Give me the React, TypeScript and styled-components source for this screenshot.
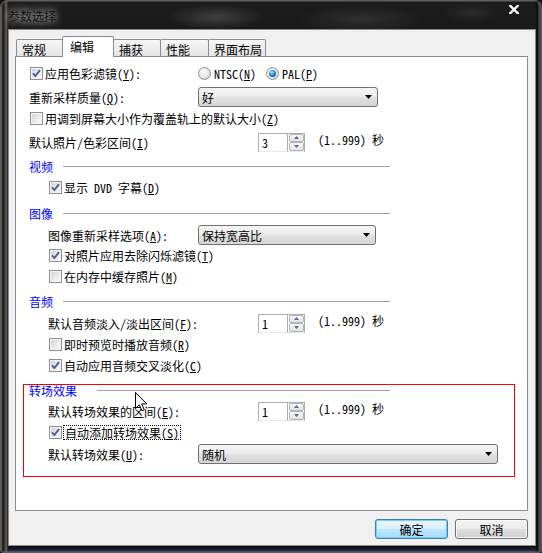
import React from "react";
import styled, { createGlobalStyle } from "styled-components";

const FONT = `"Noto Sans Mono CJK SC", "Noto Sans CJK SC", "DejaVu Sans", sans-serif`;

const GlobalStyle = createGlobalStyle`
  html, body { margin: 0; padding: 0; background: #111; }
  body { font-family: ${FONT}; font-size: 12px; color: #000; }
  * { box-sizing: border-box; }
`;

const Window = styled.div`
  position: relative;
  width: 542px;
  height: 553px;
  border: 1px solid #5e5e5e;
  border-radius: 7px 7px 3px 3px;
  padding: 0 5px 6px 7px;
  display: flex;
  flex-direction: column;
  overflow: hidden;
  background-color: #141414;
  background-image:
    radial-gradient(ellipse 70px 18px at 215px 16px, rgba(150, 150, 150, 0.3), transparent 70%),
    radial-gradient(ellipse 90px 20px at 360px 18px, rgba(120, 120, 120, 0.22), transparent 70%),
    radial-gradient(ellipse 40px 14px at 470px 12px, rgba(110, 110, 110, 0.2), transparent 70%),
    linear-gradient(90deg, #3a3632 0px, #1c1c1c 3px, #6a625c 5px, #222 7px, transparent 8px),
    linear-gradient(270deg, #101010 0px, #5a5a5a 2px, #0c0c0c 3px, transparent 6px),
    linear-gradient(0deg, #26355a 0px, #0d0d0d 5px, transparent 7px),
    linear-gradient(180deg, #1c1c1c 0%, #0e0e0e 30%, #161616 100%);
  box-shadow: inset 0 0 0 1px rgba(255, 255, 255, 0.16);
`;

const TitleBar = styled.div`
  height: 28px;
  flex-shrink: 0;
  display: flex;
  align-items: center;
`;

const Title = styled.span`
  margin-top: 1px;
  color: #111;
  line-height: 13px;
  text-shadow: 0 0 6px rgba(255, 255, 255, 0.75), 0 0 12px rgba(255, 255, 255, 0.5);
`;

const CloseGlyph = styled.svg`
  margin-left: auto;
  margin-right: 17px;
  align-self: flex-start;
  margin-top: 4px;
`;

const Client = styled.div`
  width: 528px;
  height: 517px;
  border: 1px solid #8a8a8a;
  background: #f0f0f0;
  padding: 6px 0 0 6px;
  display: flex;
  flex-direction: column;
`;

const TabRow = styled.div`
  display: flex;
  align-items: flex-end;
  height: 20px;
  padding-left: 1px;
`;

const Tab = styled.div<{ $w: number; $active?: boolean }>`
  width: ${(p) => p.$w}px;
  height: ${(p) => (p.$active ? 21 : 17)}px;
  margin-right: -1px;
  margin-bottom: ${(p) => (p.$active ? -1 : 0)}px;
  border: 1px solid #898c95;
  border-bottom: none;
  border-radius: 2px 2px 0 0;
  background: ${(p) => (p.$active ? "#ffffff" : "linear-gradient(#f6f6f6, #e4e4e4)")};
  position: relative;
  z-index: ${(p) => (p.$active ? 2 : 1)};
  display: flex;
  align-items: center;
  padding: ${(p) => (p.$active ? "0 0 2px 7px" : "2px 0 0 5px")};
  line-height: 13px;
  white-space: nowrap;
`;

const Panel = styled.div`
  width: 513px;
  height: 455px;
  border: 1px solid #898c95;
  background: #ffffff;
  padding-left: 13px;
  display: flex;
  flex-direction: column;
`;

const Row = styled.div<{ $mt?: number; $indent?: number; $h?: number }>`
  display: flex;
  align-items: center;
  height: ${(p) => p.$h ?? 20}px;
  margin-top: ${(p) => p.$mt ?? 0}px;
  padding-left: ${(p) => p.$indent ?? 0}px;
  white-space: nowrap;
`;

const Lead = styled.div<{ $w: number }>`
  display: flex;
  align-items: center;
  width: ${(p) => p.$w}px;
  flex-shrink: 0;
`;

const Text = styled.span`
  line-height: 13px;
`;

const Key = styled.span`
  text-decoration: underline;
`;

const FocusText = styled.span`
  line-height: 13px;
  margin-left: -1px;
  padding: 0 1px;
  border: 1px dotted #000;
`;

const Header = styled.div<{ $mt?: number; $h?: number }>`
  display: flex;
  align-items: center;
  width: 361px;
  height: ${(p) => p.$h ?? 20}px;
  margin-top: ${(p) => p.$mt ?? 0}px;
`;

const HeaderLabel = styled.span<{ $w: number }>`
  width: ${(p) => p.$w}px;
  flex-shrink: 0;
  color: #0000ff;
  line-height: 13px;
`;

const HeaderRule = styled.div`
  flex: 1;
  height: 1px;
  background: #a0a0a0;
`;

const Highlight = styled.div`
  margin: 9px 0 0 -6px;
  width: 492px;
  border: 1px solid #ff0000;
  padding: 0 0 12px 5px;
  display: flex;
  flex-direction: column;
`;

const CheckBox = styled.span`
  display: inline-flex;
  align-items: center;
  justify-content: center;
  width: 13px;
  height: 13px;
  flex-shrink: 0;
  margin-right: 2px;
  border: 1px solid #8f8f8f;
  background: linear-gradient(135deg, #cbd0d6 0%, #e9ebee 55%, #fbfbfb 100%);
  box-shadow: inset 0 0 0 1px #f4f4f4;
`;

const RadioItem = styled.span`
  display: inline-flex;
  align-items: center;
  margin-right: 10px;
`;

const RadioDot = styled.span<{ $on?: boolean }>`
  display: inline-flex;
  align-items: center;
  justify-content: center;
  width: 13px;
  height: 13px;
  flex-shrink: 0;
  margin-right: 3px;
  border-radius: 50%;
  border: 1px solid #8e8e8e;
  background: radial-gradient(circle at 40% 35%, #ffffff 0%, #ececec 45%, #cacaca 100%);
  &::after {
    content: "";
    display: ${(p) => (p.$on ? "block" : "none")};
    width: 7px;
    height: 7px;
    border-radius: 50%;
    background: radial-gradient(circle at 40% 35%, #d2f0ff 0%, #3c9de6 35%, #105aa8 75%, #0a3f7c 100%);
  }
`;

const Select = styled.div<{ $w: number }>`
  width: ${(p) => p.$w}px;
  height: 20px;
  border: 1px solid #707070;
  border-radius: 3px;
  background: linear-gradient(#f4f4f4 0%, #ececec 45%, #e0e0e0 55%, #d6d6d6 100%);
  display: flex;
  align-items: center;
  justify-content: space-between;
  padding: 0 5px 0 3px;
  line-height: 13px;
`;

const Spin = styled.div`
  display: flex;
  height: 19px;
`;

const SpinField = styled.div`
  width: 29px;
  height: 19px;
  border: 1px solid #abadb3;
  border-right: none;
  border-bottom-color: #e3e9ef;
  background: #ffffff;
  padding-left: 3px;
  display: flex;
  align-items: center;
  line-height: 13px;
`;

const SpinButtons = styled.div`
  width: 18px;
  height: 19px;
  border: 1px solid #abadb3;
  border-bottom-color: #e3e9ef;
  background: #ffffff;
  display: flex;
  flex-direction: column;
  padding: 0 0 0 1px;
`;

const SpinBtn = styled.div`
  flex: 1;
  border: 1px solid #b4b4b4;
  border-radius: 2px;
  background: linear-gradient(#f7f7f7, #e3e3e3);
  display: flex;
  align-items: center;
  justify-content: center;
`;

const Suffix = styled.span`
  margin-left: 13px;
  line-height: 13px;
`;

const ButtonRow = styled.div`
  display: flex;
  justify-content: flex-end;
  gap: 7px;
  margin-top: 8px;
  padding-right: 7px;
`;

const Button = styled.button<{ $primary?: boolean }>`
  width: 73px;
  height: 20px;
  padding: 0;
  border-radius: 3px;
  font-family: ${FONT};
  font-size: 12px;
  line-height: 13px;
  color: #000;
  border: 1px solid ${(p) => (p.$primary ? "#3c7fb1" : "#707070")};
  background: ${(p) =>
    p.$primary
      ? "linear-gradient(#eaf6fd 0%, #d9f0fc 49%, #bee6fd 51%, #a7d9f5 100%)"
      : "linear-gradient(#f2f2f2 0%, #ebebeb 49%, #dddddd 51%, #cfcfcf 100%)"};
  box-shadow: inset 0 0 0 1px ${(p) => (p.$primary ? "#6fd0ff" : "#fcfcfc")};
`;

const Cursor = styled.svg`
  position: absolute;
  left: 134px;
  top: 391px;
  z-index: 5;
`;

function Check({ checked }: { checked?: boolean }) {
  return (
    <CheckBox>
      {checked && (
        <svg width="9" height="9" viewBox="0 0 9 9">
          <path d="M1 4.3 L3.4 7 L8 1.2" fill="none" stroke="#4a5f97" strokeWidth="1.9" />
        </svg>
      )}
    </CheckBox>
  );
}

function Dropdown({ w, value }: { w: number; value: string }) {
  return (
    <Select $w={w}>
      <Text>{value}</Text>
      <svg width="7" height="4" viewBox="0 0 7 4">
        <path d="M0 0 H7 L3.5 4 Z" fill="#000" />
      </svg>
    </Select>
  );
}

function Spinner({ value }: { value: string }) {
  return (
    <Spin>
      <SpinField>
        <Text>{value}</Text>
      </SpinField>
      <SpinButtons>
        <SpinBtn>
          <svg width="5" height="3" viewBox="0 0 5 3">
            <path d="M0 3 H5 L2.5 0 Z" fill="#4f6c9e" />
          </svg>
        </SpinBtn>
        <SpinBtn>
          <svg width="5" height="3" viewBox="0 0 5 3">
            <path d="M0 0 H5 L2.5 3 Z" fill="#4f6c9e" />
          </svg>
        </SpinBtn>
      </SpinButtons>
      <Suffix>(1..999) 秒</Suffix>
    </Spin>
  );
}

const tabs = [
  { label: "常规", w: 47 },
  { label: "编辑", w: 52, active: true },
  { label: "捕获", w: 48 },
  { label: "性能", w: 49 },
  { label: "界面布局", w: 58 },
];

export default function App() {
  return (
    <>
      <GlobalStyle />
      <Window>
        <TitleBar>
          <Title>参数选择</Title>
          <CloseGlyph width="10" height="9" viewBox="0 0 10 9">
            <path d="M1 0.5 L9 8.5 M9 0.5 L1 8.5" stroke="#ffffff" strokeWidth="2.3" strokeLinecap="square" />
          </CloseGlyph>
        </TitleBar>
        <Client>
          <TabRow>
            {tabs.map((t) => (
              <Tab key={t.label} $w={t.w} $active={t.active}>
                {t.label}
              </Tab>
            ))}
          </TabRow>
          <Panel>
            <Row $mt={6} $indent={1}>
              <Lead $w={168}>
                <Check checked />
                <Text>
                  应用色彩滤镜(<Key>Y</Key>):
                </Text>
              </Lead>
              <RadioItem>
                <RadioDot />
                <Text>
                  NTSC(<Key>N</Key>)
                </Text>
              </RadioItem>
              <RadioItem>
                <RadioDot $on />
                <Text>
                  PAL(<Key>P</Key>)
                </Text>
              </RadioItem>
            </Row>
            <Row $mt={4}>
              <Lead $w={169}>
                <Text>
                  重新采样质量(<Key>Q</Key>):
                </Text>
              </Lead>
              <Dropdown w={180} value="好" />
            </Row>
            <Row $mt={1} $indent={1}>
              <Check />
              <Text>
                用调到屏幕大小作为覆盖轨上的默认大小(<Key>Z</Key>)
              </Text>
            </Row>
            <Row $mt={4}>
              <Lead $w={229}>
                <Text>
                  默认照片/色彩区间(<Key>I</Key>)
                </Text>
              </Lead>
              <Spinner value="3" />
            </Row>

            <Header $mt={4}>
              <HeaderLabel $w={34}>视频</HeaderLabel>
              <HeaderRule />
            </Header>
            <Row $mt={1} $indent={20}>
              <Check checked />
              <Text>
                显示 DVD 字幕(<Key>D</Key>)
              </Text>
            </Row>

            <Header $mt={6}>
              <HeaderLabel $w={34}>图像</HeaderLabel>
              <HeaderRule />
            </Header>
            <Row $mt={2} $indent={19}>
              <Lead $w={150}>
                <Text>
                  图像重新采样选项(<Key>A</Key>):
                </Text>
              </Lead>
              <Dropdown w={178} value="保持宽高比" />
            </Row>
            <Row $indent={20}>
              <Check checked />
              <Text>
                对照片应用去除闪烁滤镜(<Key>T</Key>)
              </Text>
            </Row>
            <Row $mt={1} $indent={20}>
              <Check />
              <Text>
                在内存中缓存照片(<Key>M</Key>)
              </Text>
            </Row>

            <Header $mt={5}>
              <HeaderLabel $w={34}>音频</HeaderLabel>
              <HeaderRule />
            </Header>
            <Row $mt={2} $indent={19}>
              <Lead $w={210}>
                <Text>
                  默认音频淡入/淡出区间(<Key>F</Key>):
                </Text>
              </Lead>
              <Spinner value="1" />
            </Row>
            <Row $mt={1} $indent={20}>
              <Check />
              <Text>
                即时预览时播放音频(<Key>R</Key>)
              </Text>
            </Row>
            <Row $mt={1} $indent={20}>
              <Check checked />
              <Text>
                自动应用音频交叉淡化(<Key>C</Key>)
              </Text>
            </Row>

            <Highlight>
              <Header $h={11}>
                <HeaderLabel $w={68}>转场效果</HeaderLabel>
                <HeaderRule />
              </Header>
              <Row $mt={5} $indent={19}>
                <Lead $w={210}>
                  <Text>
                    默认转场效果的区间(<Key>E</Key>):
                  </Text>
                </Lead>
                <Spinner value="1" />
              </Row>
              <Row $mt={1} $indent={20}>
                <Check checked />
                <FocusText>
                  自动添加转场效果(<Key>S</Key>)
                </FocusText>
              </Row>
              <Row $mt={2} $indent={19}>
                <Lead $w={150}>
                  <Text>
                    默认转场效果(<Key>U</Key>):
                  </Text>
                </Lead>
                <Dropdown w={300} value="随机" />
              </Row>
            </Highlight>
          </Panel>
          <ButtonRow>
            <Button $primary>确定</Button>
            <Button>取消</Button>
          </ButtonRow>
        </Client>
        <Cursor width="13" height="20" viewBox="0 0 13 20">
          <path
            d="M0.5 0.5 L0.5 16.5 L4.3 12.8 L7 18.8 L9.3 17.8 L6.7 11.9 L11.8 11.9 Z"
            fill="#ffffff"
            stroke="#000000"
            strokeWidth="1"
            strokeLinejoin="miter"
          />
        </Cursor>
      </Window>
    </>
  );
}
